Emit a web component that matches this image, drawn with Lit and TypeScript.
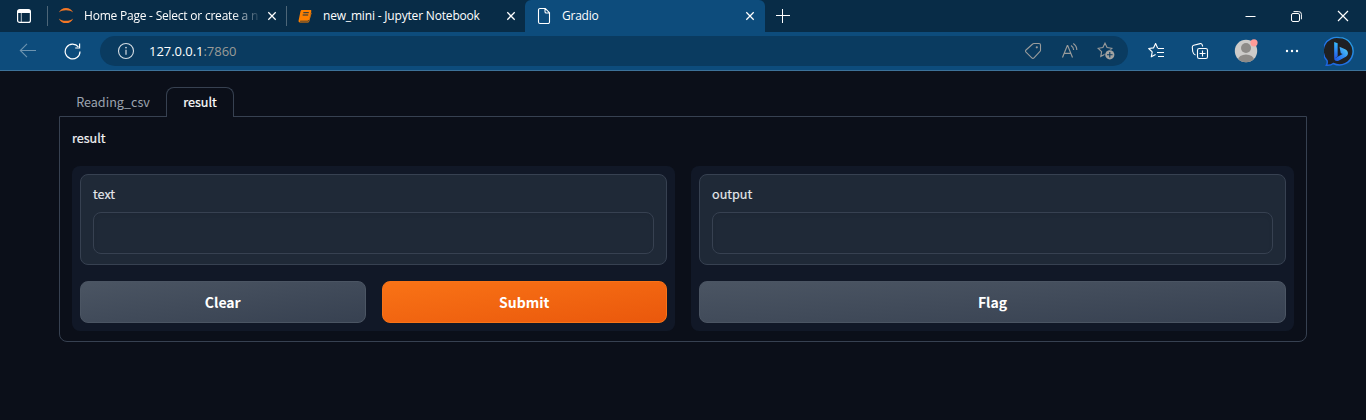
import { LitElement, html, css } from "lit";
import { customElement, property } from "lit/decorators.js";

const closeIcon = html`<svg class="x" width="10" height="10" viewBox="0 0 10 10"><path d="M1.300 1.300l7.400 7.400M8.700 1.300L1.300 8.700" stroke="#fff" stroke-width="1.25" fill="none"/></svg>`;

const star = "M8 1.2l2.1 4.4 4.7.7-3.4 3.4.8 4.8L8 12.2l-4.2 2.3.8-4.8L1.2 6.3l4.7-.7z";

const bing = html`<svg width="31" height="31" viewBox="0 0 32 32">
  <defs>
    <linearGradient id="ring" x1="0" y1="1" x2="1" y2="0"><stop offset="0" stop-color="#1b62e0"/><stop offset=".5" stop-color="#2176e8"/><stop offset="1" stop-color="#2aa5dc"/></linearGradient>
    <linearGradient id="stem" x1="0" y1="0" x2="0" y2="1"><stop offset="0" stop-color="#37bdff"/><stop offset="1" stop-color="#2456e8"/></linearGradient>
    <linearGradient id="bowl" x1="0" y1="1" x2="1" y2="0"><stop offset="0" stop-color="#1d55e8"/><stop offset=".5" stop-color="#2f8df5"/><stop offset="1" stop-color="#58d5f5"/></linearGradient>
  </defs>
  <path d="M16 1.700a14.100 14.100 0 1 1-6.400 26.700c-2.200 1.700-4.600 2-7.200 1.700 1-1.500 1.200-3.100.7-4.800A14.100 14.100 0 0 1 16 1.700z" fill="#1f2022" stroke="url(#ring)" stroke-width="1.500"/>
  <path d="M10.500 6.200l3.600 1.300v13.300l-3.600 3z" fill="url(#stem)"/>
  <path d="M16 11.200l5.800 2.500c2 .9 2.900 2.300 2.900 4.200 0 1.600-.8 2.700-2.100 3.500L15 25.500c-2 1-4.200.2-4.500-1.900l3.600-2.200 5.200-2.700-2-1z" fill="url(#bowl)"/>
</svg>`;

@customElement("browser-tab")
class BrowserTab extends LitElement {
  @property() label = "";
  @property({ type: Boolean, reflect: true }) active = false;
  static styles = css`
    :host { display: flex; align-items: center; width: 238px; height: 32px; box-sizing: border-box; padding: 0 0 0 9px; color: #fff; font: 12px/16px "Open Sans", sans-serif; }
    :host([active]) { width: 240px; background: #0d4c7c; border-radius: 6px 6px 0 0; padding-left: 10px; }
    .icon { width: 18px; height: 18px; display: flex; align-items: center; justify-content: center; margin-right: 9px; flex: none; }
    .label { width: 175px; white-space: nowrap; letter-spacing: var(--track, -0.25px); }
    .fade { -webkit-mask-image: linear-gradient(90deg, #000 148px, transparent 178px); }
    .x { margin-left: 8px; flex: none; }
    :host([active]) .x { margin-left: 7.500px; }
  `;
  render() {
    return html`<span class="icon"><slot></slot></span><span class="label ${this.label.length > 30 ? "fade" : ""}">${this.label}</span>${closeIcon}`;
  }
}

@customElement("text-field")
class TextField extends LitElement {
  @property() label = "";
  static styles = css`
    :host { display: block; box-sizing: border-box; height: 91px; padding: 10px 12px; border: 1px solid #374151; border-radius: 8px; background: #1f2937; }
    .label { display: block; height: 21px; margin-bottom: 6px; color: #e5e7eb; font: 12.600px/17px "Noto Sans CJK SC", sans-serif; -webkit-text-stroke: .15px; }
    .box { height: 40px; border: 1px solid #374151; border-radius: 8px; background: #1f2937; box-shadow: inset 0 2px 4px rgba(0,0,0,.05); }
  `;
  render() {
    return html`<span class="label">${this.label}</span><div class="box"></div>`;
  }
}

@customElement("app-root")
class AppRoot extends LitElement {
  static styles = css`
    :host { display: block; height: 420px; overflow: hidden; background: #0b0f19; font-family: "Noto Sans CJK SC", sans-serif; }
    svg { display: block; flex: none; }
    .strip { height: 32px; display: flex; align-items: center; background: #082c47; }
    .spaces { width: 47px; display: flex; justify-content: center; }
    .rule { width: 1px; height: 20px; background: #4d6678; }
    .plus { margin-left: 11px; }
    .win { margin-left: auto; display: flex; gap: 35px; padding-right: 17px; align-items: center; }
    .bar { height: 38px; display: flex; align-items: center; background: #0d4c7c; border-bottom: 1px solid #3d7299; }
    .nav { width: 100px; display: flex; align-items: center; padding-left: 19px; box-sizing: border-box; gap: 26.500px; }
    .address { width: 1028px; height: 30px; box-sizing: border-box; border-radius: 15px; background: #0a3b60; display: flex; align-items: center; padding: 0 13px 0 17px; }
    .url { margin-left: 14px; padding-bottom: 1px; color: #fff; font: 13px/18px "Open Sans", sans-serif; letter-spacing: -.04px; }
    .port { color: #9b9b98; }
    .tools { margin-left: auto; display: flex; gap: 18px; }
    .tools svg:first-child { margin-right: 1px; }
    .right { flex: 1; display: flex; align-items: center; }
    .right svg:nth-child(1) { margin-left: 19px; }
    .right svg:nth-child(2) { margin-left: 26px; }
    .right svg:nth-child(3) { margin-left: 25px; }
    .right svg:nth-child(4) { margin-left: 26px; }
    .right svg:nth-child(5) { margin-left: 24px; }
    .page { padding: 16px 59px 0; }
    .tabs { display: flex; height: 30px; padding-left: 1px; }
    .tab { box-sizing: border-box; height: 30px; font-size: 12.600px; line-height: 28px; text-align: center; border: 1px solid transparent; border-bottom: 0; border-radius: 8px 8px 0 0; color: #9ca3af; width: 106px; }
    .tab.on { width: 68px; color: #fff; border-color: #374151; background: #0b0f19; position: relative; z-index: 1; -webkit-text-stroke: .2px; }
    .panel { margin-top: -1px; height: 226px; box-sizing: border-box; border: 1px solid #374151; border-radius: 0 0 8px 8px; padding: 11px 12px; }
    .title { height: 38px; font-size: 12.600px; line-height: 20px; color: #f3f4f6; -webkit-text-stroke: .2px; }
    .cols { display: flex; gap: 16px; }
    .col { flex: 1; box-sizing: border-box; height: 165px; padding: 8px; border-radius: 8px; background: #111827; }
    .buttons { display: flex; gap: 16px; margin-top: 16px; }
    .btn { flex: 1; box-sizing: border-box; height: 42px; border: 1px solid #4b5563; border-radius: 8px; background: linear-gradient(to bottom right, #4b5563, #374151); color: #fff; text-align: center; font-size: 14px; font-weight: 700; line-height: 41px; }
    .btn.primary { border-color: #f97316; background: linear-gradient(to bottom right, #f97316, #ea580c); }
  `;

  render() {
    return html`
      <div class="strip">
        <div class="spaces"><svg width="14" height="14" viewBox="0 0 14 14"><rect x=".6" y=".6" width="12.800" height="12.800" rx="2" fill="none" stroke="#fff" stroke-width="1.200"/><path d="M1 1h12v3H1z" fill="#fff"/><path d="M4.300 4v9" stroke="#fff" stroke-opacity=".7"/></svg></div>
        <i class="rule"></i>
        <browser-tab label="Home Page - Select or create a n" style="--track:-0.22px">
          <svg width="16" height="18" viewBox="0 0 16 18"><path d="M.8 5.600C2 2.600 4.700.9 8 .9s6 1.700 7.200 4.700C13.500 4 11 3.200 8 3.200S2.500 4 .8 5.600z" fill="#f37726"/><path d="M.8 11.400C2 14.400 4.700 16.100 8 16.100s6-1.700 7.200-4.700C13.500 13 11 13.800 8 13.800s-5.500-.8-7.200-2.400z" fill="#f37726"/></svg>
        </browser-tab>
        <i class="rule"></i>
        <browser-tab label="new_mini - Jupyter Notebook" style="--track:-0.18px">
          <svg width="14" height="14" viewBox="0 0 14 14"><path d="M4 1h8.300c.8 0 1.200.5 1 1.300l-2.200 8.300c-.2.700-.7 1.200-1.500 1.200H2.400c-.6 0-.6.800 0 .8h8.200l2.600-9.200.4.500-2.400 8.600c-.2.600-.7.900-1.300.9H2c-1.200 0-1.700-.8-1.400-1.900L2.500 2.300C2.700 1.500 3.200 1 4 1z" fill="#ff8000"/><path d="M5.300 3.700h5.500M4.700 6h5.500" stroke="#143247" stroke-width="1"/></svg>
        </browser-tab>
        <browser-tab label="Gradio" active>
          <svg width="14" height="18" viewBox="0 0 14 18"><path d="M3 1.500h5.300l4.200 4.200v9.300a1.500 1.500 0 0 1-1.500 1.500H3A1.500 1.500 0 0 1 1.500 15V3A1.500 1.500 0 0 1 3 1.500zM8 1.700v3a1.300 1.300 0 0 0 1.300 1.300h3" fill="none" stroke="#fff" stroke-width="1.100"/></svg>
        </browser-tab>
        <svg class="plus" width="14" height="14" viewBox="0 0 14 14"><path d="M6.500 0v14M0 6.500h14" stroke="#fff"/></svg>
        <div class="win">
          <svg width="11" height="11" viewBox="0 0 11 11"><path d="M.5 5.500h10" stroke="#fff"/></svg>
          <svg width="11" height="11" viewBox="0 0 11 11"><rect x=".5" y="2.500" width="8" height="8" rx="1.500" fill="none" stroke="#fff"/><path d="M2.500.6h5.200a2.700 2.700 0 0 1 2.700 2.700v5" fill="none" stroke="#fff"/></svg>
          <svg width="12" height="12" viewBox="0 0 12 12"><path d="M1 1l10 10M11 1L1 11" stroke="#fff" stroke-width="1.200"/></svg>
        </div>
      </div>
      <div class="bar">
        <div class="nav">
          <svg width="18" height="16" viewBox="0 0 18 16"><path d="M17 7.500H1.500M8 .8L1.300 7.500 8 14.200" fill="none" stroke="#6d94b0" stroke-width="1.100"/></svg>
          <svg width="17" height="17" viewBox="0 0 17 17"><path d="M16 8.500A7.400 7.400 0 1 1 14.400 3.900M15.600.6v4.400h-4.400" fill="none" stroke="#fff" stroke-width="1.200"/></svg>
        </div>
        <div class="address">
          <svg width="18" height="18" viewBox="0 0 18 18"><circle cx="9" cy="9" r="7.500" fill="none" stroke="#d5dde3" stroke-width="1.100"/><path d="M9 7.800v5" stroke="#d5dde3" stroke-width="1.200"/><circle cx="9" cy="5.600" r=".85" fill="#d5dde3"/></svg>
          <span class="url">127.0.0.1<span class="port">:7860</span></span>
          <div class="tools">
            <svg width="18" height="18" viewBox="0 0 18 18"><path d="M9.800 1.500h5.200a1.500 1.500 0 0 1 1.500 1.500v5.200c0 .5-.2.900-.5 1.200l-6 6.500a1.500 1.500 0 0 1-2.200 0L2 10.200A1.500 1.500 0 0 1 2 8l6.700-6c.3-.3.700-.5 1.100-.5z" fill="none" stroke="#999b9b" stroke-width="1.100"/><circle cx="12.800" cy="5.300" r="1.100" fill="#999b9b"/></svg>
            <svg width="18" height="18" viewBox="0 0 18 18"><path d="M1.500 15.500L6.300 3.500h.4l4.800 12M3.200 11.300h6.600M10 3.500a5.500 5.500 0 0 1 2.700 4.600M12.300 1.600a8 8 0 0 1 3.500 6.500" fill="none" stroke="#999b9b" stroke-width="1.150"/></svg>
            <svg width="18" height="18" viewBox="0 0 18 18"><path d="${star}" fill="none" stroke="#999b9b" stroke-width="1.150"/><circle cx="12.800" cy="12.800" r="5.300" fill="#0a3b60"/><circle cx="12.800" cy="12.800" r="4.600" fill="#a3a3a1"/><path d="M12.800 10v5.600M10 12.800h5.600" stroke="#0a3b60" stroke-width="1.100"/></svg>
          </div>
        </div>
        <div class="right">
          <svg width="18" height="18" viewBox="0 0 18 18"><path d="M10.600 6L8.600 1.600 6.500 5.900 1.700 6.500l3.500 3.400-.9 4.900L8.600 12.500M10.600 6h.5" fill="none" stroke="#fff" stroke-width="1.150" stroke-linejoin="round"/><path d="M11 6.500h6M10 10.500h7M11 14.500h6" stroke="#fff" stroke-width="1.150"/></svg>
          <svg width="18" height="18" viewBox="0 0 18 18"><rect x="6.500" y="6.500" width="10" height="10" rx="1.800" fill="none" stroke="#fff" stroke-width="1.100"/><path d="M11.500 8.500v6M8.500 11.500h6M4.500 13C3 12.500 2 11 1.700 9.500L1.300 5.200c-.1-1 .4-1.700 1.400-2l6.500-1.600c1-.2 1.700.2 2 1.200l.5 1.700" fill="none" stroke="#fff" stroke-width="1.100"/></svg>
          <svg width="24" height="24" viewBox="0 0 24 24"><defs><clipPath id="head"><circle cx="12" cy="12" r="11.200"/></clipPath></defs><circle cx="12" cy="12" r="11.200" fill="#cdcbc9"/><g clip-path="url(#head)" fill="#8e8b88"><circle cx="12" cy="9" r="5"/><ellipse cx="12" cy="21" rx="8" ry="5.500"/></g><circle cx="20" cy="3.800" r="3.600" fill="#ff9c98"/></svg>
          <svg width="16" height="4" viewBox="0 0 16 4"><g fill="#fff"><circle cx="3" cy="2" r="1.200"/><circle cx="8" cy="2" r="1.200"/><circle cx="13" cy="2" r="1.200"/></g></svg>
          ${bing}
        </div>
      </div>
      <main class="page">
        <div class="tabs"><div class="tab">Reading_csv</div><div class="tab on">result</div></div>
        <section class="panel">
          <div class="title">result</div>
          <div class="cols">
            <div class="col"><text-field label="text"></text-field><div class="buttons"><div class="btn">Clear</div><div class="btn primary">Submit</div></div></div>
            <div class="col"><text-field label="output"></text-field><div class="buttons"><div class="btn">Flag</div></div></div>
          </div>
        </section>
      </main>`;
  }
}
